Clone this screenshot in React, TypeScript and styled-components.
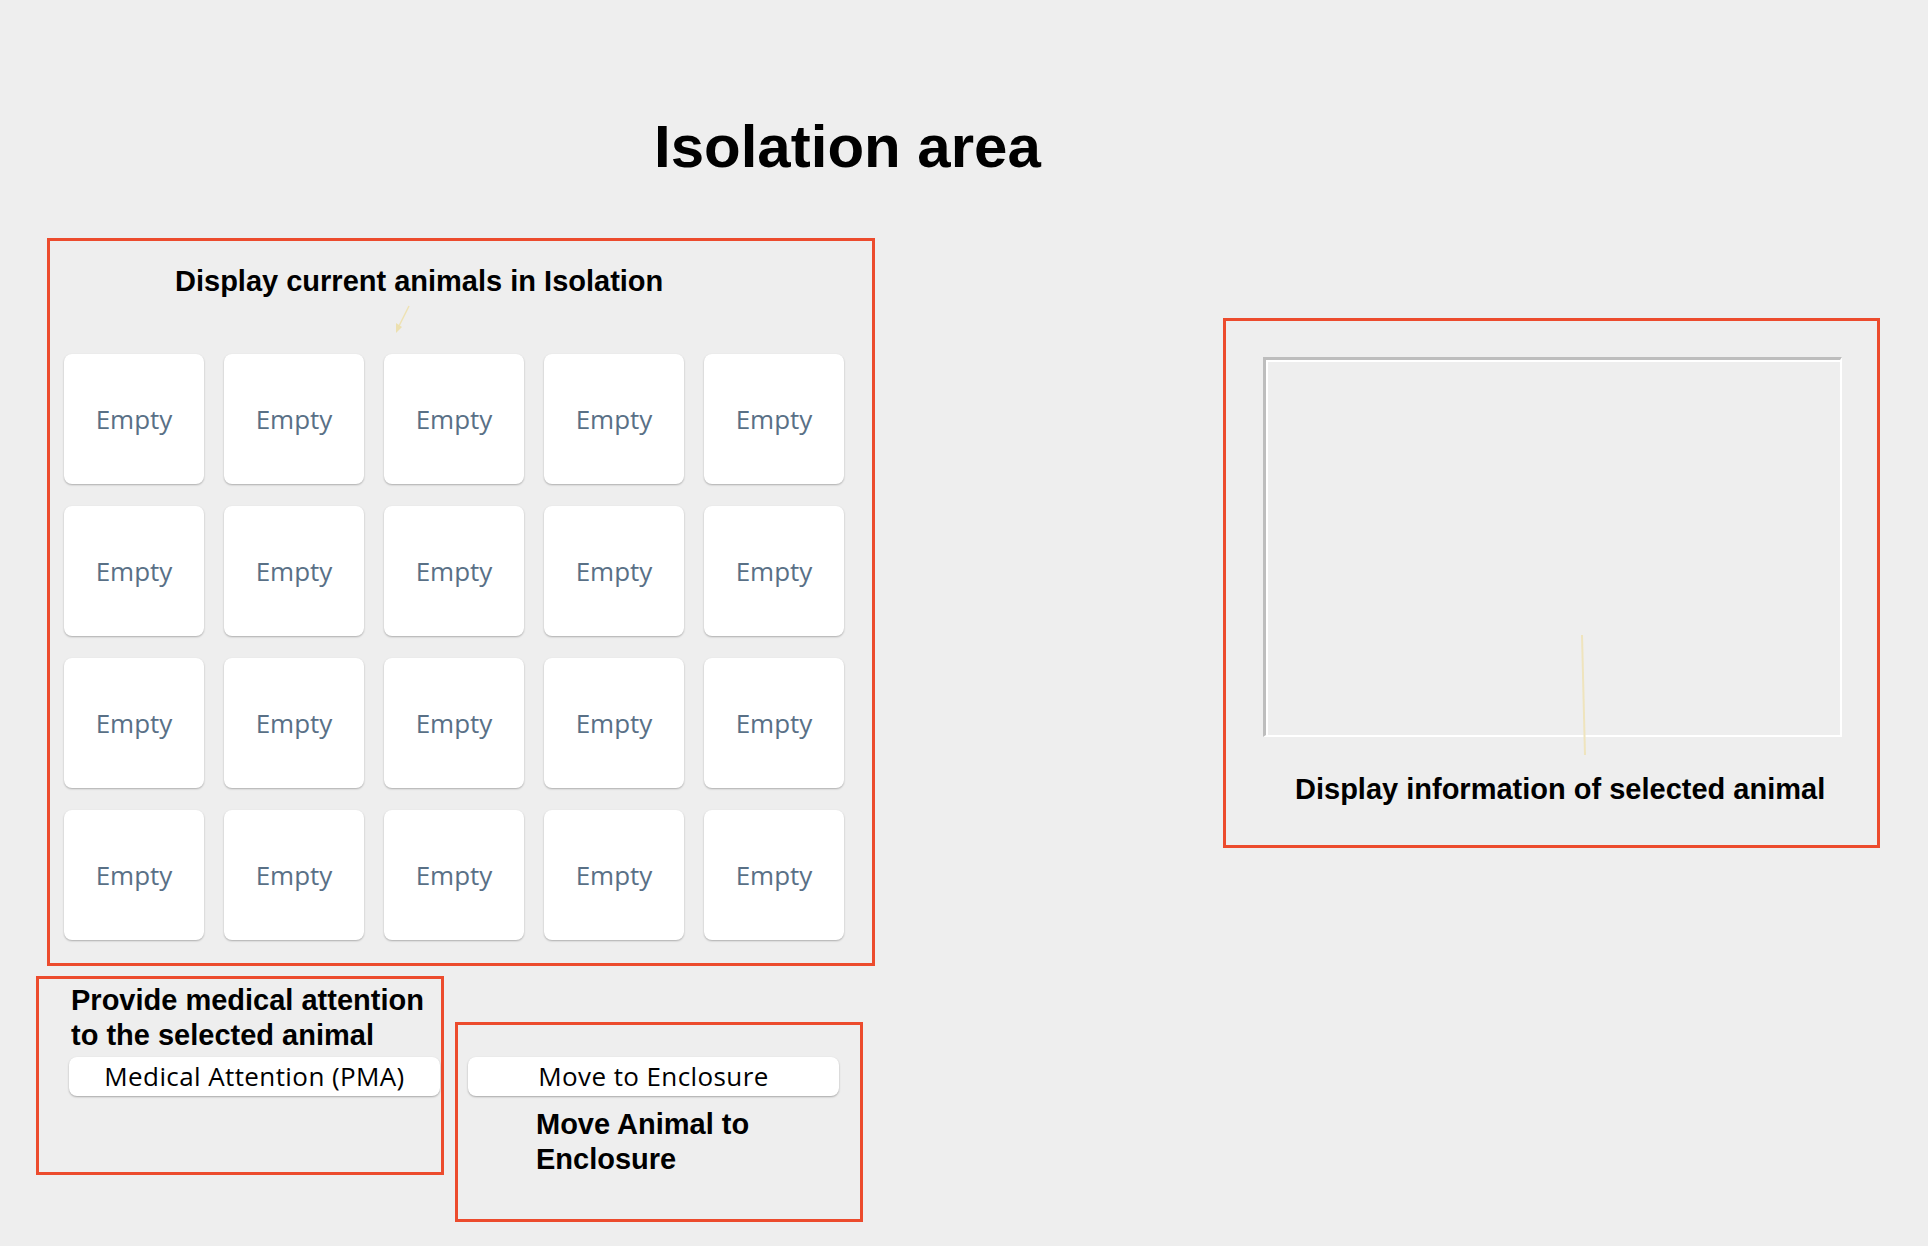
import React from "react";
import styled, { createGlobalStyle } from "styled-components";

const GlobalStyle = createGlobalStyle`
  html, body {
    margin: 0;
    padding: 0;
    background-color: #eeeeee;
  }
  body {
    font-family: "Liberation Sans", Arial, sans-serif;
    color: #000000;
  }
`;

const Page = styled.div`
  display: flex;
  flex-direction: column;
  min-height: 1246px;
  padding: 117px 0 0 36px;
  box-sizing: border-box;
`;

const Title = styled.h1`
  margin: 0 0 0 618px;
  font-size: 60px;
  line-height: 60px;
  font-weight: 700;
`;

const MainRow = styled.div`
  display: flex;
  align-items: flex-start;
  margin-top: 61px;
`;

const LeftColumn = styled.div`
  display: flex;
  flex-direction: column;
`;

const RedBox = styled.div`
  position: relative;
  box-sizing: border-box;
  border: 3px solid #ec4b2d;
`;

const AnimalsBox = styled(RedBox)`
  width: 828px;
  height: 728px;
  margin-left: 11px;
  padding: 23px 14px;
`;

const Heading = styled.div<{ $indent?: number; $top?: number }>`
  font-size: 29px;
  line-height: 34px;
  font-weight: 700;
  margin-left: ${(p) => p.$indent ?? 0}px;
  margin-top: ${(p) => p.$top ?? 0}px;
`;

const ArrowRow = styled.div`
  height: 56px;
  padding-left: 329px;
`;

const CardGrid = styled.div`
  display: grid;
  grid-template-columns: repeat(5, 140px);
  grid-auto-rows: 130px;
  column-gap: 20px;
  row-gap: 22px;
`;

const Card = styled.button`
  display: flex;
  align-items: center;
  justify-content: center;
  background: #ffffff;
  border: none;
  border-radius: 8px;
  box-shadow: 0 1px 2px rgba(0, 0, 0, 0.28);
  font-family: "Open Sans", "Noto Sans", sans-serif;
  font-size: 26px;
  color: #597086;
  cursor: pointer;
  padding: 0;
`;

const BottomRow = styled.div`
  display: flex;
  align-items: flex-start;
  margin-top: 10px;
`;

const MedicalBox = styled(RedBox)`
  width: 408px;
  height: 199px;
  padding: 4px 2px 0 30px;
`;

const EnclosureBox = styled(RedBox)`
  width: 408px;
  height: 200px;
  margin: 46px 0 0 11px;
  padding: 32px 0 0 10px;
`;

const BlockText = styled.div<{ $indent?: number; $top?: number }>`
  font-size: 29px;
  line-height: 35px;
  font-weight: 700;
  margin-left: ${(p) => p.$indent ?? 0}px;
  margin-top: ${(p) => p.$top ?? 0}px;
`;

const ActionButton = styled.button<{ $top?: number }>`
  display: block;
  width: 371px;
  height: 39px;
  margin-top: ${(p) => p.$top ?? 0}px;
  background: #ffffff;
  border: none;
  border-radius: 8px;
  box-shadow: 0 1px 2px rgba(0, 0, 0, 0.3);
  font-family: "Open Sans", "Noto Sans", sans-serif;
  font-size: 26px;
  letter-spacing: 0.4px;
  line-height: 39px;
  color: #000000;
  padding: 0;
  cursor: pointer;
`;

const InfoBox = styled(RedBox)`
  width: 657px;
  height: 530px;
  margin: 80px 0 0 348px;
  padding: 36px 0 0 37px;
`;

const InfoPanel = styled.div`
  box-sizing: border-box;
  width: 579px;
  height: 380px;
  border-top: 3px solid #bdbdbd;
  border-left: 3px solid #bdbdbd;
  border-right: 2px solid #ffffff;
  border-bottom: 2px solid #ffffff;
  box-shadow: inset 2px 2px 0 #ffffff;
`;

const NoteLine = styled.svg`
  position: absolute;
  left: 354px;
  top: 314px;
`;

const cells = Array.from({ length: 20 }, (_, i) => i);

export default function App() {
  return (
    <>
      <GlobalStyle />
      <Page>
        <Title>Isolation area</Title>
        <MainRow>
          <LeftColumn>
            <AnimalsBox>
              <Heading $indent={111}>Display current animals in Isolation</Heading>
              <ArrowRow>
                <svg width="20" height="56" viewBox="0 0 20 56">
                  <line x1="16" y1="8" x2="5" y2="30" stroke="#eee2b4" strokeWidth="1.5" />
                  <polygon points="3,35 3,25 9,29" fill="#ece0b0" />
                </svg>
              </ArrowRow>
              <CardGrid>
                {cells.map((i) => (
                  <Card key={i}>Empty</Card>
                ))}
              </CardGrid>
            </AnimalsBox>
            <BottomRow>
              <MedicalBox>
                <BlockText $indent={2}>
                  Provide medical attention
                  <br />
                  to the selected animal
                </BlockText>
                <ActionButton $top={4}>Medical Attention (PMA)</ActionButton>
              </MedicalBox>
              <EnclosureBox>
                <ActionButton>Move to Enclosure</ActionButton>
                <BlockText $indent={68} $top={11}>
                  Move Animal to
                  <br />
                  Enclosure
                </BlockText>
              </EnclosureBox>
            </BottomRow>
          </LeftColumn>
          <InfoBox>
            <InfoPanel />
            <Heading $indent={32} $top={35}>
              Display information of selected animal
            </Heading>
            <NoteLine width="8" height="120" viewBox="0 0 8 120">
              <line x1="2" y1="0" x2="5" y2="120" stroke="#efe4bd" strokeWidth="2" />
            </NoteLine>
          </InfoBox>
        </MainRow>
      </Page>
    </>
  );
}
